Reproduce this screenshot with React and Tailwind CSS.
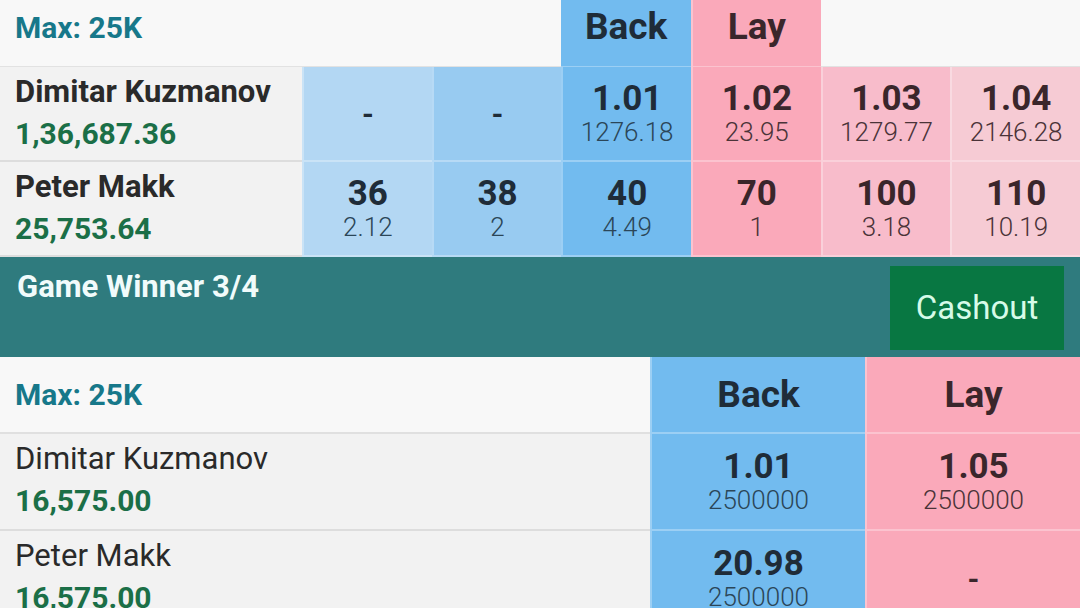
import React from 'react';

const font = { fontFamily: 'Roboto, "Liberation Sans", sans-serif' };

const topRunners = [
  {
    name: 'Dimitar Kuzmanov',
    pl: '1,36,687.36',
    back: [null, null, { odds: '1.01', size: '1276.18' }],
    lay: [{ odds: '1.02', size: '23.95' }, { odds: '1.03', size: '1279.77' }, { odds: '1.04', size: '2146.28' }],
  },
  {
    name: 'Peter Makk',
    pl: '25,753.64',
    back: [{ odds: '36', size: '2.12' }, { odds: '38', size: '2' }, { odds: '40', size: '4.49' }],
    lay: [{ odds: '70', size: '1' }, { odds: '100', size: '3.18' }, { odds: '110', size: '10.19' }],
  },
];

const bottomRunners = [
  { name: 'Dimitar Kuzmanov', pl: '16,575.00', back: { odds: '1.01', size: '2500000' }, lay: { odds: '1.05', size: '2500000' } },
  { name: 'Peter Makk', pl: '16,575.00', back: { odds: '20.98', size: '2500000' }, lay: null },
];

const backShades = ['bg-[#b3d7f3]', 'bg-[#98cbf1]', 'bg-[#72bbef]'];
const layShades = ['bg-[#faa9ba]', 'bg-[#f8bccb]', 'bg-[#f6cbd4]'];

const OddsCell = ({ price, shade, side }) => {
  const main = side === 'back' ? 'text-[#1f2c38]' : 'text-[#3a262b]';
  const sub = side === 'back' ? 'text-[#2b4658]' : 'text-[#4a3338]';
  return (
    <div className={`flex flex-col items-center justify-center border-l-2 border-b-2 border-white/30 ${shade}`}>
      {price ? (
        <>
          <span className={`text-[35px] font-bold leading-[36px] ${main}`}>{price.odds}</span>
          <span className={`text-[26px] font-light leading-[30px] ${sub}`}>{price.size}</span>
        </>
      ) : (
        <span className={`text-[30px] font-bold ${main}`}>-</span>
      )}
    </div>
  );
};

const NameCell = ({ name, pl, bold }) => (
  <div className="flex flex-col border-b-2 border-[#dddddd] bg-[#f2f2f2] pl-[15px] pt-[4px]">
    <span className={`text-[31px] leading-[42px] text-[#2a2a2a] ${bold ? 'font-bold' : 'font-normal'}`}>{name}</span>
    <span className="text-[30px] font-bold leading-[42px] text-[#1b6f47]">{pl}</span>
  </div>
);

export default function App() {
  return (
    <div className="h-[608px] w-[1080px] overflow-hidden bg-[#f7f7f7]" style={font}>
      {/* match odds ladder */}
      <div className="grid grid-cols-[302px_repeat(6,1fr)] grid-rows-[67px_95px_95px]">
        <div className="col-span-3 flex items-center border-b border-[#e2e2e2] bg-[#f8f8f8] pb-[12px] pl-[15px]">
          <span className="text-[30px] font-bold text-[#17788a]">Max: 25K</span>
        </div>
        <div className="flex items-center justify-center border-b border-white/30 bg-[#72bbef] pb-[12px] text-[37px] font-bold text-[#1f2c38]">
          Back
        </div>
        <div className="flex items-center justify-center border-b border-l-2 border-white/30 bg-[#faa9ba] pb-[12px] text-[37px] font-bold text-[#3a262b]">
          Lay
        </div>
        <div className="col-span-2 border-b border-[#e2e2e2] bg-[#f8f8f8]" />

        {topRunners.map((r) => (
          <React.Fragment key={r.name}>
            <NameCell name={r.name} pl={r.pl} bold />
            {r.back.map((p, i) => (
              <OddsCell key={`b${i}`} price={p} shade={backShades[i]} side="back" />
            ))}
            {r.lay.map((p, i) => (
              <OddsCell key={`l${i}`} price={p} shade={layShades[i]} side="lay" />
            ))}
          </React.Fragment>
        ))}
      </div>

      {/* market bar */}
      <div className="flex h-[100px] items-start justify-between bg-[#2f7b7e] pl-[17px] pr-[16px] pt-[9px]">
        <span className="text-[31px] font-bold leading-[42px] text-[#f1fbfb]">Game Winner 3/4</span>
        <button className="flex h-[84px] w-[174px] items-center justify-center bg-[#087742] text-[33px] text-[#d6fbe8]">
          Cashout
        </button>
      </div>

      {/* game winner ladder */}
      <div className="grid grid-cols-[650px_1fr_1fr] grid-rows-[77px_97px_97px]">
        <div className="flex items-center border-b-2 border-[#e0e0e0] bg-[#f8f8f8] pl-[15px]">
          <span className="text-[30px] font-bold text-[#17788a]">Max: 25K</span>
        </div>
        <div className="flex items-center justify-center border-b-2 border-l-2 border-white/30 bg-[#72bbef] text-[37px] font-bold text-[#1f2c38]">
          Back
        </div>
        <div className="flex items-center justify-center border-b-2 border-l-2 border-white/30 bg-[#faa9ba] text-[37px] font-bold text-[#3a262b]">
          Lay
        </div>

        {bottomRunners.map((r) => (
          <React.Fragment key={r.name}>
            <NameCell name={r.name} pl={r.pl} />
            <OddsCell price={r.back} shade="bg-[#72bbef]" side="back" />
            <OddsCell price={r.lay} shade="bg-[#faa9ba]" side="lay" />
          </React.Fragment>
        ))}
      </div>
    </div>
  );
}
